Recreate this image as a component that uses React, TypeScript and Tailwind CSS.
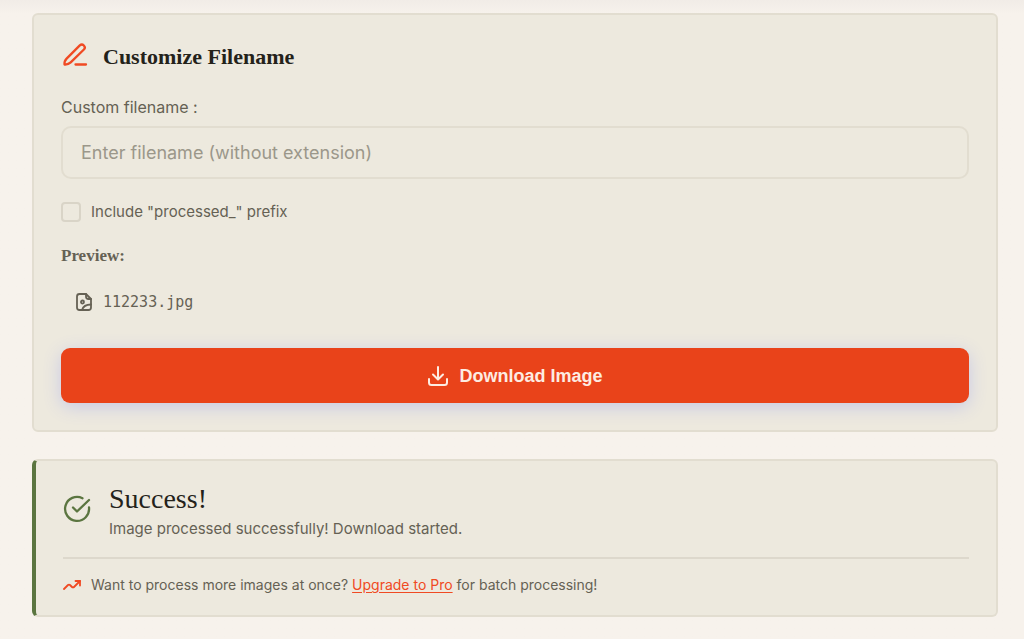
import React from "react";

const stroke = {
  fill: "none",
  stroke: "currentColor",
  strokeLinecap: "round" as const,
  strokeLinejoin: "round" as const,
  "aria-hidden": true,
};

function PenIcon() {
  return (
    <svg viewBox="0 0 28 28" className="size-7 shrink-0 text-[#f04a23]" strokeWidth="2.3" {...stroke}>
      <path d="M3.500 23.500c-.2-2.400.5-4.300 2.100-5.900L18.800 4.400a2.900 2.900 0 0 1 4.100 4.100L9.700 21.400C8 23 6 23.700 3.500 23.500z" />
      <path d="M14.500 23.500H25" />
    </svg>
  );
}

function FileImageIcon() {
  return (
    <svg viewBox="0 0 18 20" className="h-5 w-[18px] shrink-0" strokeWidth="1.8" {...stroke}>
      <path d="M11 2H4.500A2.500 2.500 0 0 0 2 4.500v11A2.500 2.500 0 0 0 4.500 18h9a2.500 2.500 0 0 0 2.500-2.500V7z" />
      <path d="M11 2v2.500A2.500 2.500 0 0 0 13.500 7H16" />
      <circle cx="7.500" cy="10" r="1.500" />
      <path d="M7 18c1-3.500 4-5.500 9-5.500" />
    </svg>
  );
}

function DownloadIcon() {
  return (
    <svg viewBox="0 0 22 22" className="size-[22px] shrink-0" strokeWidth="2" {...stroke}>
      <path d="M11 2v12M6 9.500l5 5 5-5" />
      <path d="M2 14v3.500A2.500 2.500 0 0 0 4.500 20h13a2.500 2.500 0 0 0 2.500-2.500V14" />
    </svg>
  );
}

function CheckIcon() {
  return (
    <svg viewBox="0 0 28 28" className="mt-3 size-7 shrink-0 text-[#5b7540]" strokeWidth="2.3" {...stroke}>
      <path d="M19.500 3.200A12 12 0 1 0 26 12.500" />
      <path d="M10 12.500l4 4L26 5" />
    </svg>
  );
}

function TrendIcon() {
  return (
    <svg viewBox="0 0 18 18" className="size-[18px] shrink-0 text-[#f04a23]" strokeWidth="1.8" {...stroke}>
      <path d="M1 13l4-4a1.400 1.400 0 0 1 2 0l2 2a1.400 1.400 0 0 0 2 0l6-6" />
      <path d="M12.500 5H17v4.500" />
    </svg>
  );
}

export default function App() {
  return (
    <main className="min-h-screen bg-[#f7f2ec] bg-linear-to-b from-[#f1ece7] to-[#f7f2ec] to-[14px] pt-[13px] pr-[26px] pb-[22px] pl-8 font-['Inter','Liberation_Sans',sans-serif] text-[15px] text-[#656154]">
      <section className="rounded-md border-2 border-[#e2ddd0] bg-[#ede9de] px-[27px] pt-[26px] pb-[27px]">
        <h2 className="flex h-8 items-start gap-3.5 font-['Liberation_Serif',serif] text-[22px] leading-8 font-bold text-[#24221a]">
          <PenIcon />
          Customize Filename
        </h2>
        <form onSubmit={(e) => e.preventDefault()}>
          <label htmlFor="filename" className="mt-[22px] block text-base leading-6">Custom filename :</label>
          <input
            id="filename"
            type="text"
            placeholder="Enter filename (without extension)"
            className="mt-[7px] block h-[53px] w-full rounded-[10px] border-2 border-[#e2ddd0] bg-transparent px-[18px] text-lg placeholder:text-[#9b978a]"
          />
          <label className="mt-[21px] flex items-center gap-[10px] leading-6">
            <input type="checkbox" className="size-5 appearance-none rounded border-2 border-[#d9d4c7] checked:bg-[#e9431a]" />
            Include "processed_" prefix
          </label>
          <h3 className="mt-5 font-['Liberation_Serif',serif] text-[17px] leading-6 font-bold">Preview:</h3>
          <p className="mt-[22px] flex items-center gap-[10px] pl-3.5 font-['DejaVu_Sans_Mono',monospace] leading-6">
            <FileImageIcon />
            112233.jpg
          </p>
          <button
            type="submit"
            className="mt-[34px] flex h-[55px] w-full items-center justify-center gap-[10px] rounded-[9px] bg-[#e9431a] font-['Liberation_Sans',sans-serif] text-lg font-bold text-[#fdece2] shadow-[0_4px_18px_#c8c9e5]"
          >
            <DownloadIcon />
            Download Image
          </button>
        </form>
      </section>

      <section className="mt-[27px] rounded-md border-2 border-l-4 border-[#e2ddd0] border-l-[#5b7540] bg-[#ede9de] px-[27px] pt-[22px] pb-[18px]">
        <div className="flex items-start gap-[18px] pb-4">
          <CheckIcon />
          <div>
            <h2 className="font-['Liberation_Serif',serif] text-[28px] leading-8 font-medium text-[#24221a]">Success!</h2>
            <p className="mt-0.5 leading-6">Image processed successfully! Download started.</p>
          </div>
        </div>
        <div className="flex items-center gap-[10px] border-t-2 border-[#ddd8cc] pt-3.5 text-sm leading-6">
          <TrendIcon />
          <p className="leading-6">
            Want to process more images at once?{" "}
            <a href="#upgrade" className="text-[#f04a23] underline underline-offset-2">Upgrade to Pro</a> for batch processing!
          </p>
        </div>
      </section>
    </main>
  );
}
